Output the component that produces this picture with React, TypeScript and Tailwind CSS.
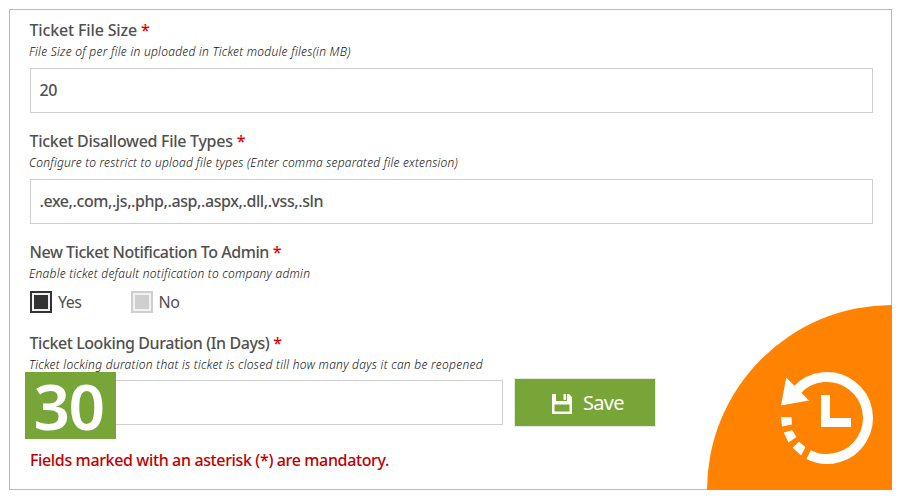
import React from "react";

function Label({ text, tracking }: { text: string; tracking: string }) {
  return (
    <div className="-ml-[0.5px] flex h-5 items-center whitespace-nowrap text-[16px] leading-5 font-medium text-[#505050]">
      <span className={tracking}>{text}</span>
      <span className="ml-1 text-[#e00000]">*</span>
    </div>
  );
}

function Hint({ text, tracking }: { text: string; tracking: string }) {
  return (
    <p className={`mt-1 -ml-px h-4 whitespace-nowrap text-[12px] leading-4 font-light italic text-[#111] ${tracking}`}>{text}</p>
  );
}

function Field({ value, tracking }: { value: string; tracking: string }) {
  return (
    <div className="mt-2 flex h-[45px] w-[843px] items-center border border-[#cfcfcf] pl-[8.5px] text-[16px] font-medium text-[#505050]">
      <span className={`-mt-0.5 ${tracking}`}>{value}</span>
    </div>
  );
}

function Box({ on }: { on: boolean }) {
  return (
    <span className={`flex size-[22px] items-center justify-center border-2 ${on ? "border-[#333] bg-[#f2f2f2]" : "border-[#cfcfcf] bg-[#f2f2f2]"}`}>
      <span className={`size-[14px] ${on ? "bg-[#333]" : "bg-[#cfcfcf]"}`} />
    </span>
  );
}

export default function App() {
  return (
    <main className="h-[500px] w-[900px] bg-white pt-[9px] pl-[9px] font-['Noto_Sans',sans-serif]">
      <section className="relative h-[481px] w-[883px] border border-[#b9b9b9] pt-[10px] pl-5">
        <Label text="Ticket File Size" tracking="tracking-[-0.15px]" />
        <Hint text="File Size of per file in uploaded in Ticket module files(in MB)" tracking="tracking-[0.26px]" />
        <Field value="20" tracking="tracking-[-0.3px]" />

        <div className="mt-[18px]">
          <Label text="Ticket Disallowed File Types" tracking="tracking-[-0.29px]" />
          <Hint text="Configure to restrict to upload file types (Enter comma separated file extension)" tracking="tracking-[0.21px]" />
          <Field value=".exe,.com,.js,.php,.asp,.aspx,.dll,.vss,.sln" tracking="tracking-[-0.42px]" />
        </div>

        <div className="mt-[18px]">
          <Label text="New Ticket Notification To Admin" tracking="tracking-[-0.45px]" />
          <Hint text="Enable ticket default notification to company admin" tracking="tracking-[0.24px]" />
          <div className="mt-[9px] flex h-[22px] items-center text-[16px] leading-[22px] text-[#505050]">
            <Box on />
            <span className="ml-[6px] w-[73px] tracking-[-0.5px]">Yes</span>
            <Box on={false} />
            <span className="ml-[5.5px] tracking-[-0.5px]">No</span>
          </div>
        </div>

        <div className="mt-5">
          <Label text="Ticket Looking Duration (In Days)" tracking="tracking-[-0.42px]" />
          <Hint text="Ticket locking duration that is ticket is closed till how many days it can be reopened" tracking="tracking-[0.275px]" />
          <div className="mt-[5px] flex items-center">
            <div className="h-[45px] w-[473px] border border-[#cfcfcf]" />
            <button className="ml-[11px] flex h-[49px] w-[142px] items-center border border-[#e4ecd9] bg-[#77a537] pl-[37px] text-[20px] text-white">
              <svg className="mt-[3px]" width="20" height="20" viewBox="0 0 20 20" fill="white">
                <path fillRule="evenodd" d="M0 0H4V7H15V0H17L20 3V20H0ZM2.5 10.5V17.5H17.5V10.5ZM11.5 0H14V6H11.5Z" />
              </svg>
              <span className="ml-[11px] tracking-[-0.7px]">Save</span>
            </button>
          </div>
        </div>

        <p className="mt-[23px] h-5 whitespace-nowrap text-[16px] leading-5 font-medium tracking-[-0.36px] text-[#c00000]">
          Fields marked with an asterisk (*) are mandatory.
        </p>

        <div className="absolute top-[362px] left-[15px] flex h-[67px] w-[91px] items-center justify-center bg-[#77a537] pr-[4px] text-[64px] leading-none font-semibold tracking-[-1.5px] text-white">
          <span>30</span>
        </div>

        <svg className="absolute top-[295px] left-[697px]" width="185" height="185" viewBox="707 305 185 185">
          <path d="M707 490A185 185 0 0 1 892 305V490Z" fill="#ff8200" />
          <path d="M796.5 390.5A41 41 0 1 1 808.6 454.6" fill="none" stroke="white" strokeWidth="10" />
          <g fill="white">
            <path d="M786.2 377.5L809 400.5L781 405.5Z" />
            <path d="M781 417H791.5L792 424.5L782 426.5Z" />
            <path d="M783.8 432.5L792.2 430.3L796.4 437L788.4 442.4Z" />
            <path d="M792.6 447.8L799 441.8L805.4 447L801.2 455.5Z" />
            <path d="M821 395H830V418H851V427H821Z" />
          </g>
        </svg>
      </section>
    </main>
  );
}
